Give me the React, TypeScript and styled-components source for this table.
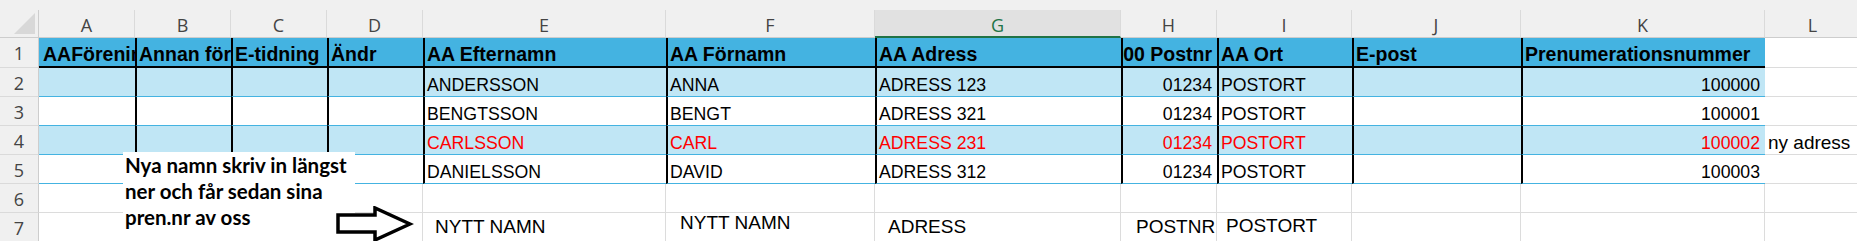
import React from 'react';
import styled, { createGlobalStyle } from 'styled-components';

const GlobalStyle = createGlobalStyle`
  *, *::before, *::after { box-sizing: border-box; }
  html, body { margin: 0; padding: 0; background: #fff; }
  body { font-family: "Liberation Sans", Arial, sans-serif; overflow: hidden; }
`;

const widths = [39, 96, 96, 96, 96, 243, 209, 246, 96, 135, 169, 244, 96];
const letters = ['A', 'B', 'C', 'D', 'E', 'F', 'G', 'H', 'I', 'J', 'K', 'L'];

const Sheet = styled.div`
  position: relative;
  width: 1857px;
  height: 241px;
  overflow: hidden;
  display: grid;
  grid-template-columns: ${widths.map((w) => `${w}px`).join(' ')};
  grid-template-rows: 10px 28px 30px repeat(6, 29px);
  background: #fff;
`;

const TopStrip = styled.div`
  grid-column: 1 / -1;
  background: #f0f0f0;
`;

const Corner = styled.div`
  position: relative;
  background: #f0f0f0;
  border-right: 1px solid #cdcdcd;
  border-bottom: 1px solid #cdcdcd;
  &::after {
    content: '';
    position: absolute;
    right: 3px;
    bottom: 3px;
    width: 21px;
    height: 21px;
    background: #d8d8d8;
    clip-path: polygon(100% 0, 100% 100%, 0 100%);
  }
`;

const ColHead = styled.div<{ $active?: boolean }>`
  display: flex;
  align-items: center;
  justify-content: center;
  padding-top: 3px;
  background: ${(p) => (p.$active ? '#e1e1e1' : '#f0f0f0')};
  border-right: 1px solid #dadada;
  border-bottom: ${(p) => (p.$active ? '2px solid #217346' : '1px solid #cdcdcd')};
  color: ${(p) => (p.$active ? '#217346' : '#444')};
  font-family: "Open Sans", sans-serif;
  font-size: 18px;
`;

const RowHead = styled.div`
  display: flex;
  align-items: center;
  justify-content: center;
  padding-top: 1px;
  background: #f0f0f0;
  border-right: 1px solid #cdcdcd;
  border-bottom: 1px solid #dadada;
  color: #444;
  font-family: "Open Sans", sans-serif;
  font-size: 18px;
`;

const TableCell = styled.div<{ $head?: boolean; $band?: boolean; $edge?: boolean; $right?: boolean; $red?: boolean }>`
  display: flex;
  align-items: flex-end;
  justify-content: ${(p) => (p.$right ? 'flex-end' : 'flex-start')};
  overflow: hidden;
  white-space: nowrap;
  padding: 0 ${(p) => (p.$right ? 5 : 0)}px 1px ${(p) => (p.$edge ? 2 : 4)}px;
  background: ${(p) => (p.$head ? '#44b3e1' : p.$band ? '#c0e6f5' : '#fff')};
  border-left: ${(p) => (p.$edge ? '2px solid #000' : 'none')};
  border-bottom: ${(p) => (p.$head ? '2px solid #000' : '1px solid #44b3e1')};
  color: ${(p) => (p.$red ? '#ff0000' : '#000')};
  font-family: "Liberation Sans", Arial, sans-serif;
  font-size: ${(p) => (p.$head ? '19.5px' : '17.7px')};
  font-weight: ${(p) => (p.$head ? 700 : 400)};
  line-height: ${(p) => (p.$head ? '22px' : '20px')};
`;

const GridCell = styled.div<{ $pl?: number; $pb?: number }>`
  display: flex;
  align-items: flex-end;
  white-space: nowrap;
  padding: 0 0 ${(p) => p.$pb ?? 1}px ${(p) => p.$pl ?? 3}px;
  border-right: 1px solid #dcdcdc;
  border-bottom: 1px solid #dcdcdc;
  color: #000;
  font-family: "Liberation Sans", Arial, sans-serif;
  font-size: 19px;
  line-height: 21px;
`;

const Note = styled.div`
  position: absolute;
  left: 123px;
  top: 152px;
  width: 232px;
  height: 100px;
  padding: 0 0 0 2px;
  background: #fff;
  color: #000;
  font-family: Lato, "Open Sans", sans-serif;
  font-weight: 700;
  font-size: 20.5px;
  line-height: 26px;
  white-space: nowrap;
`;

const Arrow = styled.svg`
  position: absolute;
  left: 336px;
  top: 206px;
`;

// A and B hold longer texts that Excel cuts at the cell edge
const headers = ['AAFörenin', 'Annan för', 'E-tidning', 'Ändr', 'AA Efternamn', 'AA Förnamn', 'AA Adress', '00 Postnr', 'AA Ort', 'E-post', 'Prenumerationsnummer'];

const people = [
  ['ANDERSSON', 'ANNA', 'ADRESS 123', '01234', 'POSTORT', '', '100000'],
  ['BENGTSSON', 'BENGT', 'ADRESS 321', '01234', 'POSTORT', '', '100001'],
  ['CARLSSON', 'CARL', 'ADRESS 231', '01234', 'POSTORT', '', '100002'],
  ['DANIELSSON', 'DAVID', 'ADRESS 312', '01234', 'POSTORT', '', '100003'],
];

// row 7: text, left indent, bottom padding
const newRow: [string, number, number][] = [
  ['', 3, 4], ['', 3, 4], ['', 3, 4], ['', 3, 4],
  ['NYTT NAMN', 12, 4],
  ['NYTT NAMN', 14, 8],
  ['ADRESS', 13, 4],
  ['POSTNR', 15, 4],
  ['POSTORT', 9, 5],
  ['', 3, 4], ['', 3, 4], ['', 3, 4],
];

export default function App() {
  return (
    <>
      <GlobalStyle />
      <Sheet>
        <TopStrip />
        <Corner />
        {letters.map((l) => (
          <ColHead key={l} $active={l === 'G'}>{l}</ColHead>
        ))}

        <RowHead>1</RowHead>
        {headers.map((h, i) => (
          <TableCell key={h} $head $edge={i > 0} $right={i === 7}>{h}</TableCell>
        ))}
        <GridCell />

        {people.map((row, r) => {
          const cells = ['', '', '', '', ...row];
          return (
            <React.Fragment key={r}>
              <RowHead>{r + 2}</RowHead>
              {cells.map((c, i) => (
                <TableCell key={i} $band={r % 2 === 0} $edge={i > 0} $right={i === 7 || i === 10} $red={r === 2}>
                  {c}
                </TableCell>
              ))}
              <GridCell $pl={3} $pb={1}>{r === 2 ? 'ny adress' : ''}</GridCell>
            </React.Fragment>
          );
        })}

        <RowHead>6</RowHead>
        {letters.map((l) => (
          <GridCell key={l} />
        ))}

        <RowHead>7</RowHead>
        {newRow.map(([t, pl, pb], i) => (
          <GridCell key={i} $pl={pl} $pb={pb}>{t}</GridCell>
        ))}

        <Note>
          Nya namn skriv in längst
          <br />
          ner och får sedan sina
          <br />
          pren.nr av oss
        </Note>
        <Arrow width="78" height="38" viewBox="0 0 78 38">
          <path d="M2 9 H39 V2 L74 18 L39 34 V26 H2 Z" fill="#fff" stroke="#000" strokeWidth="3.5" strokeLinejoin="miter" />
        </Arrow>
      </Sheet>
    </>
  );
}
